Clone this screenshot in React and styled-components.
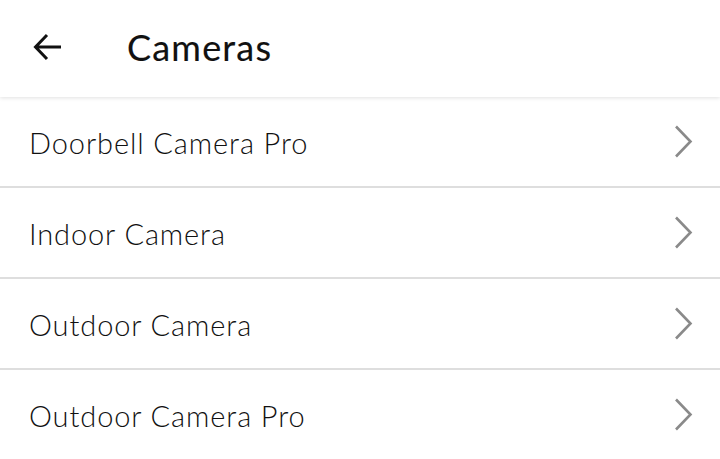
import React from "react";
import styled, { createGlobalStyle } from "styled-components";

const cameras = [
  "Doorbell Camera Pro",
  "Indoor Camera",
  "Outdoor Camera",
  "Outdoor Camera Pro",
];

export default function App() {
  return (
    <>
      <GlobalStyle />
      <Page>
        <Header>
          <BackButton aria-label="Back">
            <svg width="30" height="28" viewBox="0 0 30 28" fill="none">
              <path
                d="M28 14H3M14 2L2.5 14L14 26"
                stroke="#111"
                strokeWidth="3"
              />
            </svg>
          </BackButton>
          <Title>Cameras</Title>
        </Header>
        <List>
          {cameras.map((name) => (
            <Row key={name}>
              <Label>{name}</Label>
              <svg width="19" height="33" viewBox="0 0 19 33" fill="none">
                <path
                  d="M2 1.5L16.5 16.5L2 31.5"
                  stroke="#8a8a8a"
                  strokeWidth="2.6"
                />
              </svg>
            </Row>
          ))}
        </List>
      </Page>
    </>
  );
}

const GlobalStyle = createGlobalStyle`
  body {
    margin: 0;
    background: #fff;
    font-family: "Lato", "Liberation Sans", sans-serif;
  }
`;

const Page = styled.div`
  width: 720px;
  height: 459px;
  overflow: hidden;
  background: #fff;
`;

const Header = styled.header`
  position: relative;
  z-index: 1;
  height: 97px;
  display: flex;
  align-items: center;
  background: #fff;
  box-shadow: 0 1px 4px rgba(0, 0, 0, 0.12);
`;

const BackButton = styled.button`
  display: flex;
  align-items: center;
  justify-content: center;
  width: 30px;
  height: 28px;
  margin-left: 33px;
  margin-top: -4px;
  padding: 0;
  border: 0;
  background: none;
`;

const Title = styled.h1`
  margin: -4px 0 0 64px;
  font-size: 36px;
  font-weight: 400;
  color: #111;
  letter-spacing: 1.2px;
  -webkit-text-stroke: 0.15px #111;
`;

const List = styled.ul`
  list-style: none;
  margin: 0;
  padding: 0;
`;

const Row = styled.li`
  height: 89px;
  display: flex;
  align-items: center;
  justify-content: space-between;
  padding: 0 27px 0 29px;
  border-bottom: 2px solid #dedede;
`;

const Label = styled.span`
  margin-top: 2px;
  font-size: 29px;
  font-weight: 300;
  color: #111;
  letter-spacing: 0.9px;
`;
